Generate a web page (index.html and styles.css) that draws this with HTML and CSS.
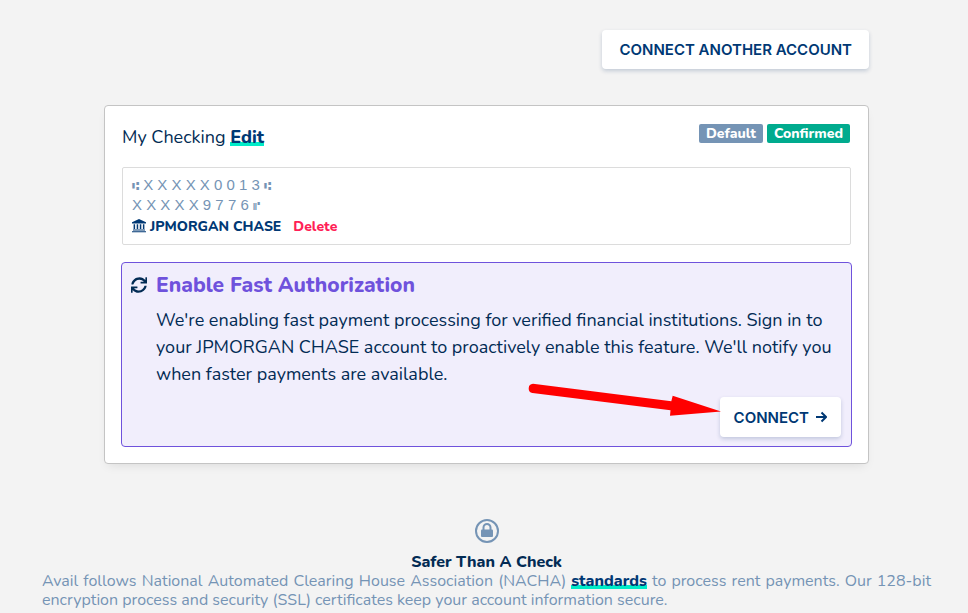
FILE: index.html
```html
<!DOCTYPE html>
<html lang="en">
<head>
  <meta charset="UTF-8">
  <meta name="viewport" content="width=device-width, initial-scale=1.0">
  <title>Bank Accounts</title>
  <link rel="stylesheet" href="styles.css">
</head>
<body>
  <main>
    <div class="toolbar">
      <button type="button" class="btn">CONNECT ANOTHER ACCOUNT</button>
    </div>

    <section class="card">
      <div class="card-header">
        <div class="card-title">My Checking <a class="link" href="#edit">Edit</a></div>
        <div class="badges">
          <span class="badge">Default</span>
          <span class="badge confirmed">Confirmed</span>
        </div>
      </div>

      <div class="account">
        <div class="number"><span class="mark">⑆</span> X X X X X 0 0 1 3 <span class="mark">⑆</span></div>
        <div class="number">X X X X X 9 7 7 6 <span class="mark">⑈</span></div>
        <div class="bank">
          <svg class="bank-icon" viewBox="0 0 14 14" aria-hidden="true">
            <path d="M7 0 14 3.2V4.500H0V3.200zM1.600 5.300h1.500v4.700H1.600zM4.700 5.300h1.500v4.700H4.700zM7.800 5.300h1.500v4.700H7.800zM10.900 5.300h1.500v4.700h-1.500zM1 10.500h12v1H1zM0 12.200h14v1.100H0z"/>
          </svg>
          <span class="bank-name">JPMORGAN CHASE</span>
          <button type="button" class="delete">Delete</button>
        </div>
      </div>

      <div class="notice">
        <svg class="sync-icon" viewBox="0 0 512 512" aria-hidden="true">
          <path d="M500 8h-27c-7 0-12 6-12 12l-3 79C415 44 350 8 272 8 143 8 35 99 12 223c-2 7 4 13 11 13h48c6 0 10-4 12-9C105 142 180 84 268 84c59 0 111 28 144 71l-94-4c-7 0-12 5-12 12v33c0 7 5 12 12 12h182c7 0 12-5 12-12V20c0-7-5-12-12-12zM12 504h27c7 0 12-6 12-12l3-79c43 55 108 91 186 91 129 0 237-91 260-215 2-7-4-13-11-13h-48c-6 0-10 4-12 9-22 85-97 143-185 143-59 0-111-28-144-71l94 4c7 0 12-5 12-12v-33c0-7-5-12-12-12H12c-7 0-12 5-12 12v176c0 7 5 12 12 12z"/>
        </svg>
        <div class="notice-body">
          <h2>Enable Fast Authorization</h2>
          <p>We're enabling fast payment processing for verified financial institutions. Sign in to your JPMORGAN CHASE account to proactively enable this feature. We'll notify you when faster payments are available.</p>
          <div class="actions">
            <svg class="pointer" viewBox="0 0 193 34" aria-hidden="true">
              <path d="M5 .7 143.3 18.3 144.7 12.7 193 28.5 142 32.7 142.5 27.3 4.5 10A4.7 4.7 0 0 1 5 .7z"/>
            </svg>
            <button type="button" class="btn btn-connect">CONNECT
              <svg class="arrow" viewBox="0 0 12 12" aria-hidden="true"><path d="M1 6h10M6.5 1.5 11 6l-4.500 4.500"/></svg>
            </button>
          </div>
        </div>
      </div>
    </section>

    <footer>
      <svg class="lock" viewBox="0 0 24 24" aria-hidden="true">
        <circle cx="12" cy="12" r="11"/>
        <path d="M8.500 11V8.500a3.500 3.500 0 0 1 7 0V11"/>
        <rect x="6" y="10.500" width="12" height="7.500" rx="1"/>
      </svg>
      <h3>Safer Than A Check</h3>
      <p>Avail follows National Automated Clearing House Association (NACHA) <a class="link" href="#standards">standards</a> to process rent payments. Our 128-bit encryption process and security (SSL) certificates keep your account information secure.</p>
    </footer>
  </main>
</body>
</html>
```
FILE: styles.css
```css
body {
  margin: 0;
  background: #f3f3f3;
  color: #022b54;
  font-family: Nunito, Lato, sans-serif;
  font-size: 18px;
}
h2, h3, p {
  margin: 0;
}
main {
  padding: 30px 37px 0 42px;
}
.toolbar {
  display: flex;
  justify-content: flex-end;
  margin: 0 62px 36px;
}
.btn {
  display: flex;
  align-items: center;
  height: 39px;
  padding: 0 17px;
  border: none;
  border-radius: 4px;
  background: #fff;
  color: #003874;
  font-family: Inter, sans-serif;
  font-size: 15px;
  font-weight: 600;
  white-space: nowrap;
  box-shadow: 0 2px 4px rgba(0, 43, 100, 0.2);
  cursor: pointer;
}
.btn-connect {
  gap: 6px;
  height: 40px;
  padding: 0 14px;
}
.card {
  margin: 0 62px;
  padding: 16px;
  border: 1px solid #c4c4c4;
  border-radius: 4px;
  background: #fff;
  box-shadow: 0 5px 10px -4px rgba(0, 0, 0, 0.1);
}
.card-header {
  display: flex;
  justify-content: space-between;
  align-items: flex-start;
  margin: 0 1px 15px;
}
.card-title {
  line-height: 30px;
}
.link {
  color: #003874;
  font-weight: 800;
  text-decoration: none;
  background: linear-gradient(#00ecc8, #00ecc8) 0 85% / 100% 4px no-repeat;
}
.badges {
  display: flex;
  gap: 4px;
  padding: 2px 1px 0 0;
}
.badge {
  padding: 0 7px;
  border-radius: 2px;
  background: #7594b5;
  color: #fff;
  font-size: 14px;
  font-weight: 800;
  line-height: 19px;
}
.badge.confirmed {
  background: #00ab8e;
}
.account {
  margin: 0 1px 17px;
  padding: 7px 9px;
  border: 1px solid #dcdcdc;
  border-radius: 2px;
}
.number {
  height: 20px;
  color: #7594b5;
  font-family: "Liberation Sans", "DejaVu Sans", sans-serif;
  font-size: 15px;
  line-height: 20px;
}
.mark {
  font-size: 12px;
  line-height: 1;
}
.bank {
  display: flex;
  align-items: center;
  height: 22px;
  color: #003874;
  font-size: 14px;
  font-weight: 800;
}
.bank-icon {
  width: 14px;
  height: 14px;
  margin-right: 4px;
  fill: #003874;
}
.delete {
  margin-left: 12px;
  padding: 0;
  border: none;
  background: none;
  color: #ff1f57;
  font: inherit;
  cursor: pointer;
}
.notice {
  display: flex;
  gap: 9px;
  padding: 8px 10px 9px 9px;
  border: 1px solid #6f52dc;
  border-radius: 4px;
  background: #f1eefc;
}
.sync-icon {
  flex: none;
  width: 16px;
  height: 16px;
  margin-top: 6px;
  fill: #022b54;
}
.notice-body {
  flex: 1;
}
.notice h2 {
  margin-bottom: 8px;
  color: #6f52dc;
  font-size: 21px;
  font-weight: 800;
  line-height: 28px;
}
.notice p {
  line-height: 27px;
}
.actions {
  position: relative;
  display: flex;
  justify-content: flex-end;
  margin-top: 9px;
}
.pointer {
  position: absolute;
  right: 120px;
  top: -14px;
  width: 193px;
  height: 34px;
  fill: #f00;
}
.arrow {
  width: 12px;
  height: 12px;
  fill: none;
  stroke: #003874;
  stroke-width: 2;
}
footer {
  margin-top: 55px;
  color: #7594b5;
  font-size: 16px;
  line-height: 19px;
}
.lock {
  display: block;
  width: 24px;
  height: 24px;
  margin: 0 auto 10px;
  fill: none;
  stroke: #7594b5;
  stroke-width: 2;
}
.lock rect {
  fill: #7594b5;
  stroke: none;
}
footer h3 {
  color: #022b54;
  font-size: 16px;
  font-weight: 800;
  text-align: center;
}
footer p {
  text-align: justify;
}
```
